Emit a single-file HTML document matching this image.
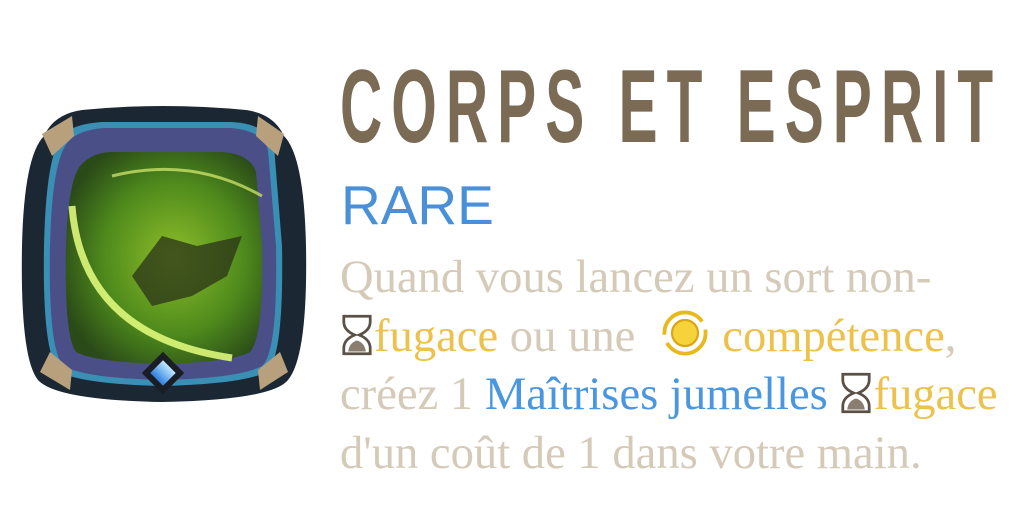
<!DOCTYPE html>
<html><head><meta charset="utf-8"><style>
html,body{margin:0;padding:0;background:#fff;width:1024px;height:512px;overflow:hidden}
.t{position:absolute;left:340px;top:52px;font-family:"Liberation Sans",sans-serif;font-weight:bold;font-size:104px;color:#7b6a54;letter-spacing:16px;transform-origin:0 0;transform:scaleX(0.563);white-space:nowrap;line-height:110px}
.r{position:absolute;left:341px;top:174px;font-family:"Liberation Sans",sans-serif;font-size:55px;color:#4a90d9;line-height:62px}
.b{position:absolute;left:340px;top:248px;font-family:"Liberation Serif",serif;font-size:46.6px;line-height:58.5px;color:#d5cab8;white-space:nowrap}
.g{color:#ecc24d}.bl{color:#4a97e0}
.ic{display:inline-block;vertical-align:-6px}
</style></head><body>
<svg style="position:absolute;left:12px;top:96px" width="304" height="316" viewBox="0 0 304 316">
<defs>
<radialGradient id="gr" cx="0.55" cy="0.5" r="0.6"><stop offset="0" stop-color="#8fbe2a"/><stop offset="0.6" stop-color="#4e8a1c"/><stop offset="1" stop-color="#2a4a18"/></radialGradient>
<linearGradient id="dm" x1="0" y1="0" x2="0" y2="1"><stop offset="0" stop-color="#bfe8ff"/><stop offset="1" stop-color="#2c7fe0"/></linearGradient>
</defs>
<path d="M70 14 Q150 6 234 14 Q262 18 272 40 Q292 60 294 150 Q296 260 276 284 Q260 304 150 306 Q44 304 26 284 Q8 262 10 150 Q12 60 32 40 Q42 18 70 14Z" fill="#1b2732"/>
<path d="M50 40 Q60 28 90 26 L220 26 Q255 28 262 50 L270 150 Q272 260 255 276 Q230 288 150 290 Q70 288 48 276 Q30 260 32 150 Q34 60 50 40Z" fill="#3a8fb5"/>
<path d="M56 46 Q66 34 92 32 L218 32 Q250 34 256 54 L264 150 Q266 256 250 270 Q228 282 150 284 Q72 282 52 270 Q36 256 38 150 Q40 64 56 46Z" fill="#4b4f88"/>
<path d="M68 70 Q80 56 100 56 L210 56 Q238 58 244 76 L250 150 Q252 240 238 256 Q220 266 150 268 Q82 266 64 256 Q52 240 54 150 Q56 86 68 70Z" fill="url(#gr)"/>
<path d="M60 110 Q70 240 220 262" stroke="#e8ff80" stroke-width="7" fill="none" opacity="0.85"/>
<path d="M100 80 Q180 60 250 100" stroke="#d8f070" stroke-width="3" fill="none" opacity="0.7"/>
<path d="M120 180 L150 140 L185 150 L230 140 L215 180 L180 200 L140 210Z" fill="#2a3318" opacity="0.75"/>
<path d="M30 38 L60 20 L62 40 L40 60Z M272 38 L246 20 L244 40 L266 60Z M28 276 L58 294 L60 274 L38 256Z M276 276 L248 294 L246 274 L268 256Z" fill="#b8a07c"/>
<rect x="136" y="262" width="30" height="30" transform="rotate(45 151 277)" fill="#1a1e24"/>
<rect x="142" y="268" width="18" height="18" transform="rotate(45 151 277)" fill="url(#dm)"/>
</svg>
<div class="t">CORPS ET ESPRIT</div>
<div class="r">RARE</div>
<div class="b">Quand vous lancez un sort non-<br><svg class="ic" width="34" height="44" viewBox="0 0 30 40"><path d="M3 3 H27 V8 Q27 16 17 20 Q27 24 27 32 V37 H3 V32 Q3 24 13 20 Q3 16 3 8Z" fill="#fff" stroke="#5a5046" stroke-width="2.5"/><path d="M7 35 Q8 27 15 25 Q22 27 23 35Z" fill="#8a7e70"/></svg><span class="g">fugace</span> ou une &nbsp;<svg class="ic" width="52" height="48" viewBox="0 0 48 44"><circle cx="24" cy="22" r="19" fill="none" stroke="#e9b91c" stroke-width="3.5" stroke-dasharray="50 8"/><circle cx="24" cy="22" r="12" fill="#f6d33a" stroke="#d9a514" stroke-width="2"/></svg> <span class="g">compétence</span>,<br>créez 1 <span class="bl">Maîtrises jumelles</span> <svg class="ic" width="34" height="44" viewBox="0 0 30 40"><path d="M3 3 H27 V8 Q27 16 17 20 Q27 24 27 32 V37 H3 V32 Q3 24 13 20 Q3 16 3 8Z" fill="#fff" stroke="#5a5046" stroke-width="2.5"/><path d="M7 35 Q8 27 15 25 Q22 27 23 35Z" fill="#8a7e70"/></svg><span class="g">fugace</span><br>d'un coût de 1 dans votre main.</div>
</body></html>
